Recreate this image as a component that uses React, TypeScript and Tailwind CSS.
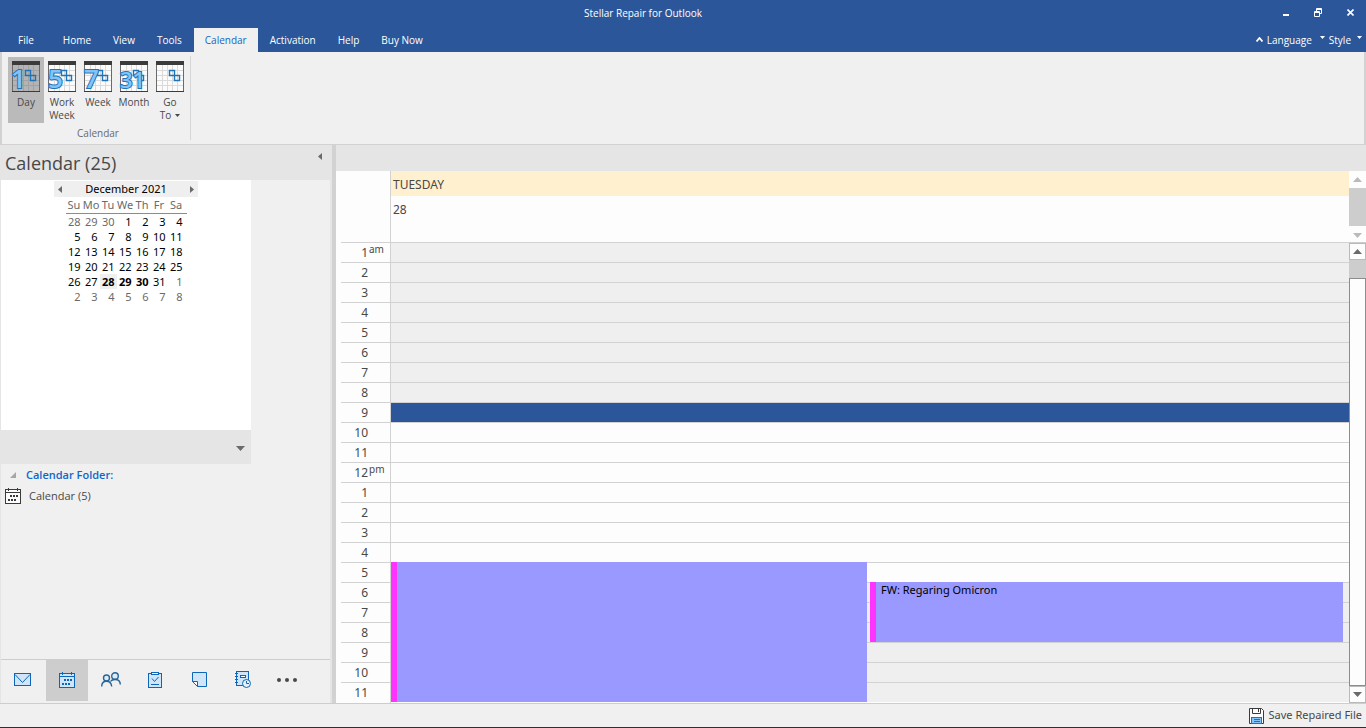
import type { ReactNode } from 'react';

const TABS = ['Home', 'View', 'Tools', 'Calendar', 'Activation', 'Help', 'Buy Now'];

const WEEKDAYS = ['Su', 'Mo', 'Tu', 'We', 'Th', 'Fr', 'Sa'];

const WEEKS = [
  [28, 29, 30, 1, 2, 3, 4],
  [5, 6, 7, 8, 9, 10, 11],
  [12, 13, 14, 15, 16, 17, 18],
  [19, 20, 21, 22, 23, 24, 25],
  [26, 27, 28, 29, 30, 31, 1],
  [2, 3, 4, 5, 6, 7, 8],
];

// 1 am up to 11 pm
const HOURS = Array.from({ length: 23 }, (_, i) => i + 1);
const SELECTED_HOUR = 9;

function isOtherMonth(week: number, day: number) {
  return (week === 0 && day > 7) || (week >= 4 && day < 9);
}

function slotColor(hour: number) {
  if (hour === SELECTED_HOUR) return 'bg-[#2b579a]';
  if (hour > 9 && hour < 18) return 'bg-[#fdfdfd]';
  return 'bg-[#efefef]';
}

/* ---------- Icons ---------- */

function Triangle({ dir, className = '' }: { dir: 'up' | 'down' | 'left' | 'right'; className?: string }) {
  const paths = {
    up: 'M0 5 L4.500 0 L9 5 Z',
    down: 'M0 0 H9 L4.500 5 Z',
    left: 'M4 0 V7 L0 3.500 Z',
    right: 'M0 0 V7 L4 3.500 Z',
  };
  const vertical = dir === 'up' || dir === 'down';
  return (
    <svg
      width={vertical ? 9 : 4}
      height={vertical ? 5 : 7}
      viewBox={vertical ? '0 0 9 5' : '0 0 4 7'}
      fill="currentColor"
      className={className}
      aria-hidden="true"
    >
      <path d={paths[dir]} />
    </svg>
  );
}

function RibbonIcon({ digits, active }: { digits?: string; active?: boolean }) {
  return (
    <svg width="28" height="31" viewBox="0 0 28 31" className="overflow-visible" aria-hidden="true">
      <rect x="0.500" y="0.500" width="27" height="30" fill={active ? '#b4b4b4' : '#fbfbfb'} stroke="#6a6a6a" />
      <path
        d="M6.500 4V30M11.500 4V30M16.500 4V30M21.500 4V30M1 9.500H27M1 14.500H27M1 19.500H27M1 24.500H27"
        stroke={active ? '#a2a2a2' : '#dadada'}
        fill="none"
      />
      <rect width="28" height="4" fill="#3b3b3b" />
      <path d="M0 30.500H28" stroke="#3b3b3b" />
      <path d="M13.500 9.500H18.500V19.500H23.500V14.500H13.500Z" fill="none" stroke="#1f74b8" strokeWidth="1.400" />
      {digits && (
        <text
          x={digits === '1' ? -1 : 0}
          y="27"
          fontSize={digits.length > 1 ? 22 : 26}
          fontWeight="600"
          fontFamily="'Open Sans', sans-serif"
          fill="#83c3f7"
          stroke="#1f74b8"
          strokeWidth="2"
          paintOrder="stroke"
        >
          {digits}
        </text>
      )}
    </svg>
  );
}

function MailIcon() {
  return (
    <svg width="18" height="14" viewBox="0 0 18 14" fill="#cfe6fa" stroke="#0f66b8" aria-hidden="true">
      <rect x="0.500" y="0.500" width="16" height="12" />
      <path d="M1 1.500 L8.500 9.500 L16 1.500" />
    </svg>
  );
}

function CalendarIcon({ stroke = '#0f66b8', fill = '#cfe6fa' }: { stroke?: string; fill?: string }) {
  return (
    <svg width="16" height="16" viewBox="0 0 16 16" fill="none" stroke={stroke} aria-hidden="true">
      <rect x="0.500" y="1.500" width="15" height="14" fill={fill} />
      <path d="M0 4.500H16M3.500 0V3M12.500 0V3" />
      <path d="M5 8H7M8 8H10M11 8H13M3 12H5M6 12H8M9 12H11" strokeWidth="2" />
    </svg>
  );
}

function PeopleIcon() {
  return (
    <svg width="20" height="15" viewBox="0 0 20 15" fill="none" stroke="#2a6496" strokeWidth="1.400" aria-hidden="true">
      <circle cx="5.500" cy="6" r="3" fill="#dcebf7" />
      <circle cx="14" cy="4" r="3.300" fill="#dcebf7" />
      <path d="M0.700 14.500C0.700 11 2.600 9.300 5.500 9.300S10.300 11 10.700 14.500" />
      <path d="M9.500 9.500C10.300 8.200 12 7.500 14 7.500C17 7.500 19.300 9 19.300 12.500" />
    </svg>
  );
}

function TaskIcon() {
  return (
    <svg width="14" height="16" viewBox="0 0 14 16" fill="none" stroke="#0f66b8" aria-hidden="true">
      <rect x="0.500" y="1.500" width="13" height="14" fill="#cfe6fa" />
      <rect x="3.500" y="0.500" width="7" height="2" fill="#fff" />
      <path d="M4 6.500L6.500 9.500L10.500 5M3 12.500H11" />
    </svg>
  );
}

function NoteIcon() {
  return (
    <svg width="15" height="15" viewBox="0 0 15 15" fill="#cfe6fa" stroke="#0f66b8" aria-hidden="true">
      <path d="M0.500 0.500H14.500V14.500H5.500L0.500 9.500Z" />
      <path d="M0.500 9.500H5.500V14.500Z" fill="#fff" />
    </svg>
  );
}

function JournalIcon() {
  return (
    <svg width="16" height="17" viewBox="0 0 16 17" fill="none" stroke="#0f66b8" aria-hidden="true">
      <rect x="1.500" y="0.500" width="12" height="14" fill="#cfe6fa" />
      <path d="M0 2.500H3M0 5.500H3M0 8.500H3M0 11.500H3" />
      <rect x="5.500" y="4.500" width="5" height="2" fill="#fff" />
      <circle cx="11.500" cy="12.500" r="4" fill="#e4f0fa" />
      <path d="M11.500 10V12.500H14" />
    </svg>
  );
}

function MoreIcon() {
  return (
    <svg width="20" height="4" viewBox="0 0 20 4" fill="#484848" aria-hidden="true">
      <circle cx="2" cy="2" r="2" />
      <circle cx="10" cy="2" r="2" />
      <circle cx="18" cy="2" r="2" />
    </svg>
  );
}

function SaveIcon() {
  return (
    <svg width="16" height="16" viewBox="0 0 16 16" fill="none" stroke="#3b3b3b" aria-hidden="true">
      <path d="M0.500 0.500H12.500L14.500 2.500V15.500H0.500Z" fill="#fdfdfd" />
      <path d="M3.500 0.500V5.500H11.500V0.500M9.500 1V4" />
      <rect x="2.500" y="9.500" width="10" height="6" fill="#83c3f7" stroke="#1f74b8" />
      <path d="M5 11.500H11M5 13.500H11" stroke="#1f74b8" />
    </svg>
  );
}

function CaretIcon() {
  return (
    <svg width="5" height="8" viewBox="0 0 5 8" fill="currentColor" aria-hidden="true">
      <path d="M0 0H5L2.500 3Z" />
    </svg>
  );
}

/* ---------- Title bar + tabs ---------- */

function TitleBar() {
  return (
    <div className="flex h-7 items-center justify-end bg-[#2b579a] pr-3 pb-1 text-white">
      <h1 className="flex-1 pt-0.5 pl-1 text-center text-[10px]">Stellar Repair for Outlook</h1>
      <div className="flex items-center gap-6">
        <button aria-label="Minimize" className="flex h-4 w-2 items-center justify-center">
          <svg width="6" height="8" viewBox="0 0 6 8" fill="currentColor" aria-hidden="true">
            <rect y="6" width="6" height="2" />
          </svg>
        </button>
        <button aria-label="Restore" className="flex h-4 w-2 items-center justify-center">
          <svg width="8" height="9" viewBox="0 0 8 9" fill="none" stroke="currentColor" className="shrink-0" aria-hidden="true">
            <path d="M2.500 3V0.500H7.500V5.500H5M2.500 1.500H7.500" />
            <path d="M0.500 3.500H5.500V8.500H0.500ZM0.500 4.500H5.500" />
          </svg>
        </button>
        <button aria-label="Close" className="flex h-4 w-2 items-center justify-center">
          <svg width="7" height="7" viewBox="0 0 7 7" fill="none" stroke="currentColor" strokeWidth="1.600" aria-hidden="true">
            <path d="M0.500 0.500L6.500 6.500M6.500 0.500L0.500 6.500" />
          </svg>
        </button>
      </div>
    </div>
  );
}

function TabStrip() {
  return (
    <nav className="flex h-6 items-stretch bg-[#2b579a] text-[10px] text-white">
      <button className="px-[18px]">File</button>
      {TABS.map((tab) => (
        <button
          key={tab}
          className={tab === 'Calendar' ? 'mx-px bg-[#f0f0f0] px-[11px] text-[#1066c8]' : 'px-[11px]'}
        >
          {tab}
        </button>
      ))}
      <div className="ml-auto flex items-center gap-1 pr-1">
        <svg width="7" height="5" viewBox="0 0 7 5" fill="none" stroke="currentColor" strokeWidth="1.800" className="mb-0.5" aria-hidden="true">
          <path d="M0.500 4.500L3.500 1L6.500 4.500" />
        </svg>
        <button className="flex items-center gap-2">
          Language
          <CaretIcon />
        </button>
        <button className="flex items-center gap-1.5">
          Style
          <CaretIcon />
        </button>
      </div>
    </nav>
  );
}

/* ---------- Ribbon ---------- */

interface RibbonButtonProps {
  digits?: string;
  active?: boolean;
  children: ReactNode;
}

function RibbonButton({ digits, active, children }: RibbonButtonProps) {
  return (
    <button className={`flex h-[66px] w-9 flex-col items-center pt-1 ${active ? 'bg-[#bababa]' : ''}`}>
      <RibbonIcon digits={digits} active={active} />
      <span className="mt-1 text-[10px] leading-[13px]">{children}</span>
    </button>
  );
}

function Ribbon() {
  return (
    <div className="flex h-[93px] border-x-2 border-b border-[#d2d2d2] bg-[#f0f0f0] text-[#484848]">
      <div className="my-1 flex flex-col items-center border-r border-[#d6d6d6] pt-px pr-0.5 pl-1.5">
        <div className="flex">
          <RibbonButton digits="1" active>Day</RibbonButton>
          <RibbonButton digits="5">Work<br />Week</RibbonButton>
          <RibbonButton digits="7">Week</RibbonButton>
          <RibbonButton digits="31">Month</RibbonButton>
          <RibbonButton>
            Go
            <br />
            <span className="inline-flex items-center gap-1">
              To
              <svg width="5" height="3" viewBox="0 0 5 3" fill="currentColor" aria-hidden="true">
                <path d="M0 0H5L2.500 3Z" />
              </svg>
            </span>
          </RibbonButton>
        </div>
        <span className="mt-1 text-[10px] leading-3 text-[#6a6a6a]">Calendar</span>
      </div>
    </div>
  );
}

/* ---------- Side panel ---------- */

function MiniCalendar() {
  return (
    <div className="flex h-[250px] flex-col items-center bg-white pt-px text-[11px]">
      <div className="flex h-4 w-36 items-center justify-between bg-[#efefef] px-1 text-[#6a6a6a]">
        <button aria-label="Previous month"><Triangle dir="left" /></button>
        <span className="text-black">December 2021</span>
        <button aria-label="Next month"><Triangle dir="right" /></button>
      </div>
      <table className="w-[121px] table-fixed border-collapse text-right">
        <thead>
          <tr className="h-4 border-b border-[#8c8c8c] text-[#6a6a6a]">
            {WEEKDAYS.map((day) => (
              <th key={day} className="w-[17px] p-0 text-center leading-[15px] font-normal">{day}</th>
            ))}
            <th className="p-0" />
          </tr>
        </thead>
        <tbody>
          {WEEKS.map((week, w) => (
            <tr key={w} className="h-[15px]">
              {week.map((day) => {
                const other = isOtherMonth(w, day);
                const busy = w === 4 && day >= 28 && day <= 30;
                return (
                  <td
                    key={day}
                    className={`p-0 pr-0.5 leading-[15px] ${other ? 'text-[#6a6a6a]' : 'text-black'} ${busy ? 'font-bold' : ''} ${busy && day === 28 ? 'bg-[#efefef]' : ''}`}
                  >
                    {day}
                  </td>
                );
              })}
            </tr>
          ))}
        </tbody>
      </table>
    </div>
  );
}

const MODULES = [
  { label: 'Mail', icon: <MailIcon /> },
  { label: 'Calendar', icon: <CalendarIcon /> },
  { label: 'People', icon: <PeopleIcon /> },
  { label: 'Tasks', icon: <TaskIcon /> },
  { label: 'Notes', icon: <NoteIcon /> },
  { label: 'Journal', icon: <JournalIcon /> },
  { label: 'More', icon: <MoreIcon /> },
];

function SidePanel() {
  return (
    <aside className="flex w-[330px] shrink-0 flex-col border-l border-[#e5e5e5] bg-[#f0f0f0] text-[#484848]">
      <div className="flex h-[35px] items-center justify-between bg-[#e5e5e5] pr-2 pl-1">
        <h2 className="pt-0.5 font-['Open_Sans',sans-serif] text-[18px]">Calendar (25)</h2>
        <button aria-label="Collapse panel" className="mb-3 text-[#6a6a6a]">
          <Triangle dir="left" />
        </button>
      </div>

      <div className="w-[250px]">
        <MiniCalendar />
        <div className="flex h-[34px] items-center justify-end bg-[#e5e5e5] pt-0.5 pr-1.5 text-[#6a6a6a]">
          <button aria-label="Show more"><Triangle dir="down" /></button>
        </div>
      </div>

      <button className="flex h-[22px] items-center gap-2.5 pl-[9px] font-['Open_Sans',sans-serif] text-[11px] font-semibold text-[#1066c8]">
        <svg width="6" height="6" viewBox="0 0 6 6" fill="#a6a6a6" aria-hidden="true">
          <path d="M6 0V6H0Z" />
        </svg>
        Calendar Folder:
      </button>
      <button className="flex h-5 items-center gap-2 pl-1 font-['Open_Sans',sans-serif] text-[11px]">
        <CalendarIcon stroke="#3b3b3b" fill="#fdfdfd" />
        Calendar (5)
      </button>

      <nav className="mt-auto flex gap-0.5 border-t border-[#cdcdcd] pb-0.5 pl-px">
        {MODULES.map(({ label, icon }) => (
          <button
            key={label}
            aria-label={label}
            className={`flex h-[41px] w-[42px] items-center justify-center pb-0.5 ${label === 'Calendar' ? 'bg-[#cdcdcd]' : ''}`}
          >
            {icon}
          </button>
        ))}
      </nav>
    </aside>
  );
}

/* ---------- Day view ---------- */

function DayHeader() {
  return (
    <div className="flex h-[71px] bg-[#fdfdfd]">
      <div className="w-[55px] shrink-0 border-r border-[#d2d2d2]" />
      <div className="flex-1 text-xs">
        <div className="flex h-[25px] items-center bg-[#fff1cf] pt-0.5 pl-0.5">TUESDAY</div>
        <div className="pt-1.5 pl-0.5">28</div>
      </div>
      <div className="flex w-[17px] flex-col items-center bg-[#fdfdfd] text-[#bababa]">
        <button aria-label="Scroll all-day up" className="flex h-[17px] items-center"><Triangle dir="up" /></button>
        <div className="w-full flex-1 bg-[#cdcdcd]" />
        <button aria-label="Scroll all-day down" className="flex h-4 items-center pt-0.5"><Triangle dir="down" /></button>
      </div>
    </div>
  );
}

function HourLabel({ hour }: { hour: number }) {
  const suffix = hour === 1 ? 'am' : hour === 12 ? 'pm' : '';
  return (
    <div className="ml-[5px] flex h-5 border-t border-[#d2d2d2] text-xs leading-5">
      <span className="w-[27px] text-right">{hour > 12 ? hour - 12 : hour}</span>
      <span className="pl-px text-[10px] leading-3">{suffix}</span>
    </div>
  );
}

function DayGrid() {
  return (
    <div className="flex flex-1 bg-[#fdfdfd]">
      <div className="w-[55px] shrink-0 border-r border-[#d2d2d2]">
        {HOURS.map((hour) => <HourLabel key={hour} hour={hour} />)}
      </div>

      <div className="relative flex-1">
        {HOURS.map((hour) => (
          <div key={hour} className={`h-5 border-t border-[#d2d2d2] ${slotColor(hour)}`} />
        ))}
        {/* Appointments lie over the slots: 5 pm onwards and 6 pm to 9 pm */}
        <button
          aria-label="Appointment"
          className="absolute top-80 left-0 h-[140px] w-[calc(50%-3px)] border-l-[6px] border-[#ff33ff] bg-[#9999ff]"
        />
        <button className="absolute top-[340px] right-1.5 left-1/2 flex h-[60px] border-l-[6px] border-[#ff33ff] bg-[#9999ff] pl-[5px] text-[11px] leading-4 text-black">
          FW: Regaring Omicron
        </button>
      </div>

      <div className="flex w-[17px] flex-col bg-[#cdcdcd] pt-px text-[#6a6a6a]">
        <button aria-label="Scroll up" className="flex h-[17px] items-center justify-center border border-[#bababa] bg-[#fdfdfd]">
          <Triangle dir="up" />
        </button>
        <div className="mt-[18px] flex-1 border border-[#8c8c8c] bg-[#fdfdfd]" />
        <button aria-label="Scroll down" className="flex h-[17px] items-center justify-center border border-[#bababa] bg-[#fdfdfd]">
          <Triangle dir="down" />
        </button>
      </div>
    </div>
  );
}

export default function App() {
  return (
    <div className="flex min-h-screen flex-col bg-[#f0f0f0] font-['Noto_Sans','Open_Sans',sans-serif] text-[#484848]">
      <header className="font-['Open_Sans',sans-serif]">
        <TitleBar />
        <TabStrip />
        <Ribbon />
      </header>

      <div className="flex flex-1">
        <SidePanel />
        <div className="w-1.5 shrink-0 border-r-4 border-[#d2d2d2] bg-[#e5e5e5]" />
        <main className="flex min-w-0 flex-1 flex-col">
          <div className="h-[26px] bg-[#e5e5e5]" />
          <DayHeader />
          <DayGrid />
        </main>
      </div>

      <footer className="flex h-[25px] items-center justify-end border-t border-b border-t-[#cdcdcd] border-b-[#3a2a30] bg-[#f0f0f0] pr-1">
        <button className="flex items-center gap-1 text-[11px]">
          <SaveIcon />
          Save Repaired File
        </button>
      </footer>
    </div>
  );
}
